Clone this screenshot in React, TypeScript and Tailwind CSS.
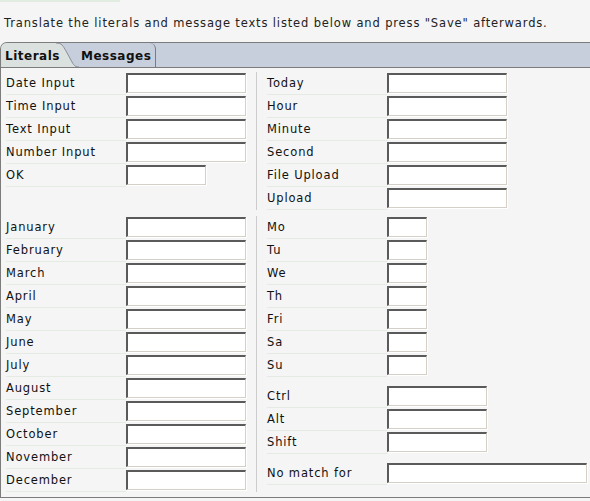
import React from "react";

type Row = { label: string; w: number };

const top: Row[] = [
  { label: "Date Input", w: 120 },
  { label: "Time Input", w: 120 },
  { label: "Text Input", w: 120 },
  { label: "Number Input", w: 120 },
  { label: "OK", w: 80 },
];

const topRight: Row[] = [
  { label: "Today", w: 120 },
  { label: "Hour", w: 120 },
  { label: "Minute", w: 120 },
  { label: "Second", w: 120 },
  { label: "File Upload", w: 120 },
  { label: "Upload", w: 120 },
];

const months = [
  "January", "February", "March", "April", "May", "June",
  "July", "August", "September", "October", "November", "December",
].map((m) => ({ label: m, w: 120 }));

const days = ["Mo", "Tu", "We", "Th", "Fri", "Sa", "Su"].map((d) => ({ label: d, w: 40 }));
const keys = ["Ctrl", "Alt", "Shift"].map((k) => ({ label: k, w: 100 }));

function Field({ label, w }: Row) {
  return (
    <div className="flex h-[23px]">
      <div className="w-[120px] h-[23px] border-b border-[#e3ebe3] flex items-center pt-[2px]">
        <span>{label}</span>
      </div>
      {/* inset style text box, width varies per literal */}
      <input
        type="text"
        style={{ width: w }}
        className="mt-[1px] h-[20px] box-border bg-white border-t-2 border-l-2 border-t-[#5a5a5a] border-l-[#5a5a5a] border-b border-r border-b-[#d4d0c8] border-r-[#d4d0c8] shadow-[1px_1px_0_#ffffff] outline-none"
      />
    </div>
  );
}

function Rows({ rows }: { rows: Row[] }) {
  return (
    <div className="flex flex-col">
      {rows.map((r) => (
        <Field key={r.label} {...r} />
      ))}
    </div>
  );
}

export default function App() {
  return (
    <div className="w-[590px] h-[501px] overflow-hidden bg-[#f5f5f5] text-[#111] text-[11.5px] tracking-[0.85px] font-['DejaVu_Sans','Verdana',sans-serif]">
      <div className="w-[120px] h-[2px] bg-[#e2ede2]" />
      <p className="mt-[14px] pl-[4px] leading-[14px] text-[#222] whitespace-nowrap">
        Translate the literals and message texts listed below and press "Save" afterwards.
      </p>

      {/* tab strip */}
      <div className="mt-[12px] w-[620px] h-[26px] box-border flex border-t border-b border-l border-[#7c7c7c] rounded-tl-[7px] bg-[#c7cedc]">
        <div className="relative w-[78px] h-full">
          <svg className="absolute inset-0" width="78" height="24" viewBox="0 0 78 24">
            <path
              d="M0 24 L0 6 Q0 0 6 0 L55 0 C61 0 62 3 65 8 L71 19 C73 23 75 24 78 24 Z"
              fill="#dbe1df"
            />
            <path
              d="M55 0 C61 0 62 3 65 8 L71 19 C73 23 75 24 78 24"
              fill="none"
              stroke="#8a8f98"
              strokeWidth="1"
            />
          </svg>
          <span className="relative flex h-full items-center pl-[4px] pt-[1px] text-[12px] font-bold tracking-[0.5px] text-[#111]">
            Literals
          </span>
        </div>
        <div className="w-[77px] h-full box-border border-r border-[#7c7c7c] rounded-tr-[6px] flex items-center pl-[2px] pt-[1px] text-[12px] font-bold tracking-[0.5px]">
          Messages
        </div>
      </div>

      {/* literals panel */}
      <div className="w-[620px] box-border border-l border-b border-[#7c7c7c] pt-[4px] pb-[5px]">
        <div className="flex">
          <div className="w-[255px] pl-[5px]">
            <Rows rows={top} />
          </div>
          <div className="border-l border-[#cccccc] pl-[10px]">
            <Rows rows={topRight} />
          </div>
        </div>

        <div className="flex mt-[6px]">
          <div className="w-[255px] pl-[5px]">
            <Rows rows={months} />
          </div>
          <div className="border-l border-[#cccccc] pl-[10px] flex flex-col gap-[8px]">
            <Rows rows={days} />
            <Rows rows={keys} />
            <Rows rows={[{ label: "No match for", w: 200 }]} />
          </div>
        </div>
      </div>
    </div>
  );
}
